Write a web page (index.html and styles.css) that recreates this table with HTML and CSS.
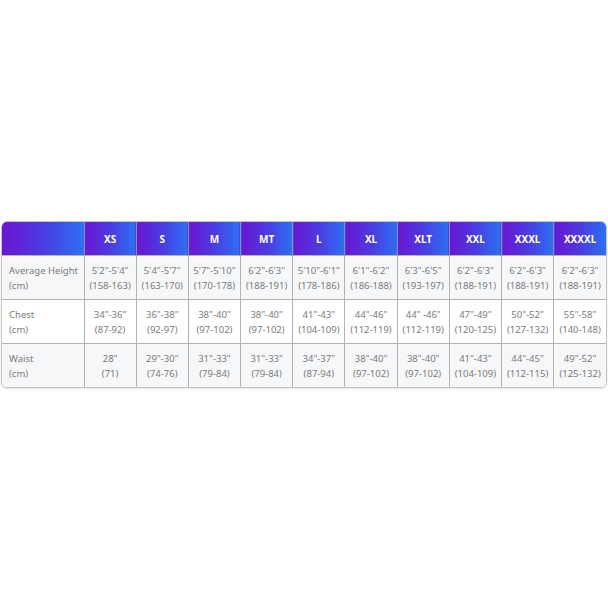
FILE: index.html
```html
<!DOCTYPE html>
<html>
<head>
<meta charset="utf-8">
<link rel="stylesheet" href="styles.css">
</head>
<body>
<div class="page">
  <div class="card">
    <table class="sizes">
      <colgroup>
        <col class="first">
        <col span="10">
      </colgroup>
      <thead>
        <tr>
          <th class="corner"></th>
          <th>XS</th><th>S</th><th>M</th><th>MT</th><th>L</th><th>XL</th><th>XLT</th><th>XXL</th><th>XXXL</th><th>XXXXL</th>
        </tr>
      </thead>
      <tbody>
        <tr class="shade">
          <td class="label">Average Height<br>(cm)</td>
          <td>5'2"-5'4"<br>(158-163)</td>
          <td>5'4"-5'7"<br>(163-170)</td>
          <td>5'7"-5'10"<br>(170-178)</td>
          <td>6'2"-6'3"<br>(188-191)</td>
          <td>5'10"-6'1"<br>(178-186)</td>
          <td>6'1"-6'2"<br>(186-188)</td>
          <td>6'3"-6'5"<br>(193-197)</td>
          <td>6'2"-6'3"<br>(188-191)</td>
          <td>6'2"-6'3"<br>(188-191)</td>
          <td>6'2"-6'3"<br>(188-191)</td>
        </tr>
        <tr>
          <td class="label">Chest<br>(cm)</td>
          <td>34"-36"<br>(87-92)</td>
          <td>36"-38"<br>(92-97)</td>
          <td>38"-40"<br>(97-102)</td>
          <td>38"-40"<br>(97-102)</td>
          <td>41"-43"<br>(104-109)</td>
          <td>44"-46"<br>(112-119)</td>
          <td>44" -46"<br>(112-119)</td>
          <td>47"-49"<br>(120-125)</td>
          <td>50"-52"<br>(127-132)</td>
          <td>55"-58"<br>(140-148)</td>
        </tr>
        <tr class="shade">
          <td class="label">Waist<br>(cm)</td>
          <td>28"<br>(71)</td>
          <td>29"-30"<br>(74-76)</td>
          <td>31"-33"<br>(79-84)</td>
          <td>31"-33"<br>(79-84)</td>
          <td>34"-37"<br>(87-94)</td>
          <td>38"-40"<br>(97-102)</td>
          <td>38"-40"<br>(97-102)</td>
          <td>41"-43"<br>(104-109)</td>
          <td>44"-45"<br>(112-115)</td>
          <td>49"-52"<br>(125-132)</td>
        </tr>
      </tbody>
    </table>
  </div>
</div>
</body>
</html>
```
FILE: styles.css
```css
html, body {
  margin: 0;
  padding: 0;
  background: #ffffff;
}
.page {
  width: 608px;
  height: 608px;
  padding-top: 221px;
  padding-left: 1px;
  box-sizing: border-box;
}
.card {
  width: 606px;
  border-radius: 6px;
  overflow: hidden;
  border: 1px solid #c4c4c4;
  box-sizing: border-box;
  box-shadow: 0 1px 2px rgba(0,0,0,0.12);
}
.sizes {
  width: 100%;
  table-layout: fixed;
  border-collapse: collapse;
  font-family: "Noto Sans", "DejaVu Sans", sans-serif;
}
col.first {
  width: 82px;
}
.sizes th {
  height: 33px;
  padding: 0;
  color: #ffffff;
  font-size: 10px;
  font-weight: 700;
  text-align: center;
  background: linear-gradient(90deg, #6a16d2 0%, #4b3be0 50%, #2a71f3 100%);
  border-left: 1px solid #8f8fb8;
}
.sizes th.corner {
  border-left: none;
}
.sizes td {
  height: 43px;
  padding: 0;
  color: #7a7a7a;
  font-size: 9.5px;
  line-height: 15px;
  text-align: center;
  border: 1px solid #b3b3b3;
  background: #ffffff;
}
.sizes tr.shade td {
  background: #f6f7f9;
}
.sizes td.label {
  text-align: left;
  padding-left: 7px;
  border-left: none;
}
.sizes tr td:last-child {
  border-right: none;
}
.sizes tbody tr:last-child td {
  border-bottom: none;
}
```
